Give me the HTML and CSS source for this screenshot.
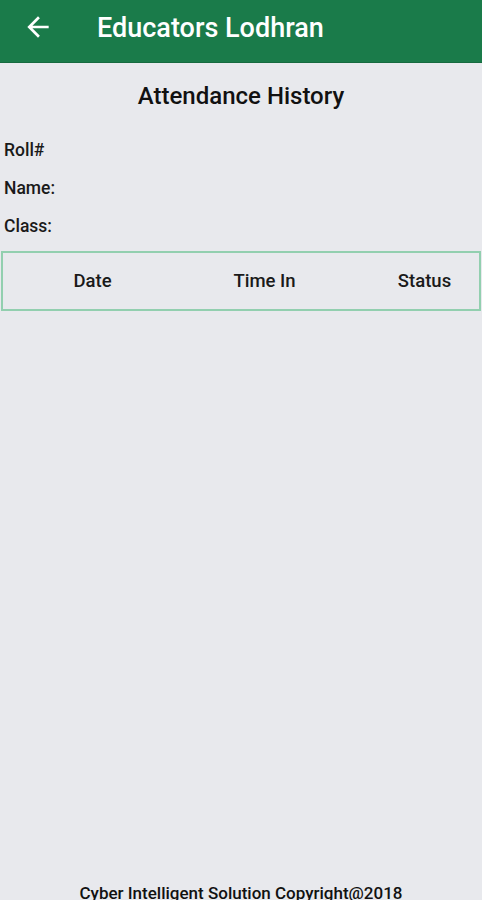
FILE: index.html
```html
<!DOCTYPE html>
<html>
<head>
<meta charset="utf-8">
<link rel="stylesheet" href="styles.css">
</head>
<body>
<div class="app">
  <header class="bar">
    <svg class="back" width="32" height="32" viewBox="0 0 24 24"><path d="M20 11H7.83l5.59-5.59L12 4l-8 8 8 8 1.41-1.41L7.83 13H20v-2z" fill="#fff"/></svg>
    <span class="bar-title">Educators Lodhran</span>
  </header>
  <main class="content">
    <h1 class="heading">Attendance History</h1>
    <div class="info">
      <div class="info-row">Roll#</div>
      <div class="info-row">Name:</div>
      <div class="info-row">Class:</div>
    </div>
    <div class="table-head">
      <span class="col col-date">Date</span>
      <span class="col col-time">Time In</span>
      <span class="col col-status">Status</span>
    </div>
    <div class="spacer"></div>
    <footer class="foot">Cyber Intelligent Solution Copyright@2018</footer>
  </main>
</div>
</body>
</html>
```
FILE: styles.css
```css
html, body {
  margin: 0;
  padding: 0;
  height: 100%;
  overflow: hidden;
}
body {
  background: #e8e9ed;
  font-family: Roboto, "Liberation Sans", sans-serif;
  color: #1a1a1a;
}
.app {
  height: 900px;
  display: flex;
  flex-direction: column;
}
.bar {
  height: 63px;
  background: #1a7b4a;
  display: flex;
  align-items: center;
  border-bottom: 1px solid #166a3f;
  box-sizing: border-box;
}
.back {
  margin-left: 22px;
  margin-top: -8px;
}
.bar-title {
  margin-left: 43px;
  color: #fff;
  font-size: 27px;
  font-weight: 500;
  line-height: 32px;
  margin-top: -6px;
}
.content {
  flex: 1;
  display: flex;
  flex-direction: column;
}
.heading {
  margin: 18px 0 0;
  text-align: center;
  font-size: 24px;
  font-weight: 500;
  line-height: 30px;
  color: #111;
}
.info {
  margin-top: 28px;
  padding-left: 4px;
  display: flex;
  flex-direction: column;
  gap: 16px;
}
.info-row {
  font-size: 17.5px;
  font-weight: 500;
  line-height: 22px;
}
.table-head {
  margin: 14px 1px 0 1px;
  height: 60px;
  box-sizing: border-box;
  border: 2px solid #92cfaf;
  display: flex;
  align-items: center;
  font-size: 18.5px;
  font-weight: 500;
}
.col {
  text-align: center;
}
.col-date { flex: 0 0 179px; }
.col-time { flex: 0 0 165px; }
.col-status { flex: 0 0 155px; }
.spacer { flex: 1; }
.foot {
  text-align: center;
  font-size: 17px;
  font-weight: 500;
  line-height: 20px;
  margin-bottom: -3px;
  color: #111;
}
```
